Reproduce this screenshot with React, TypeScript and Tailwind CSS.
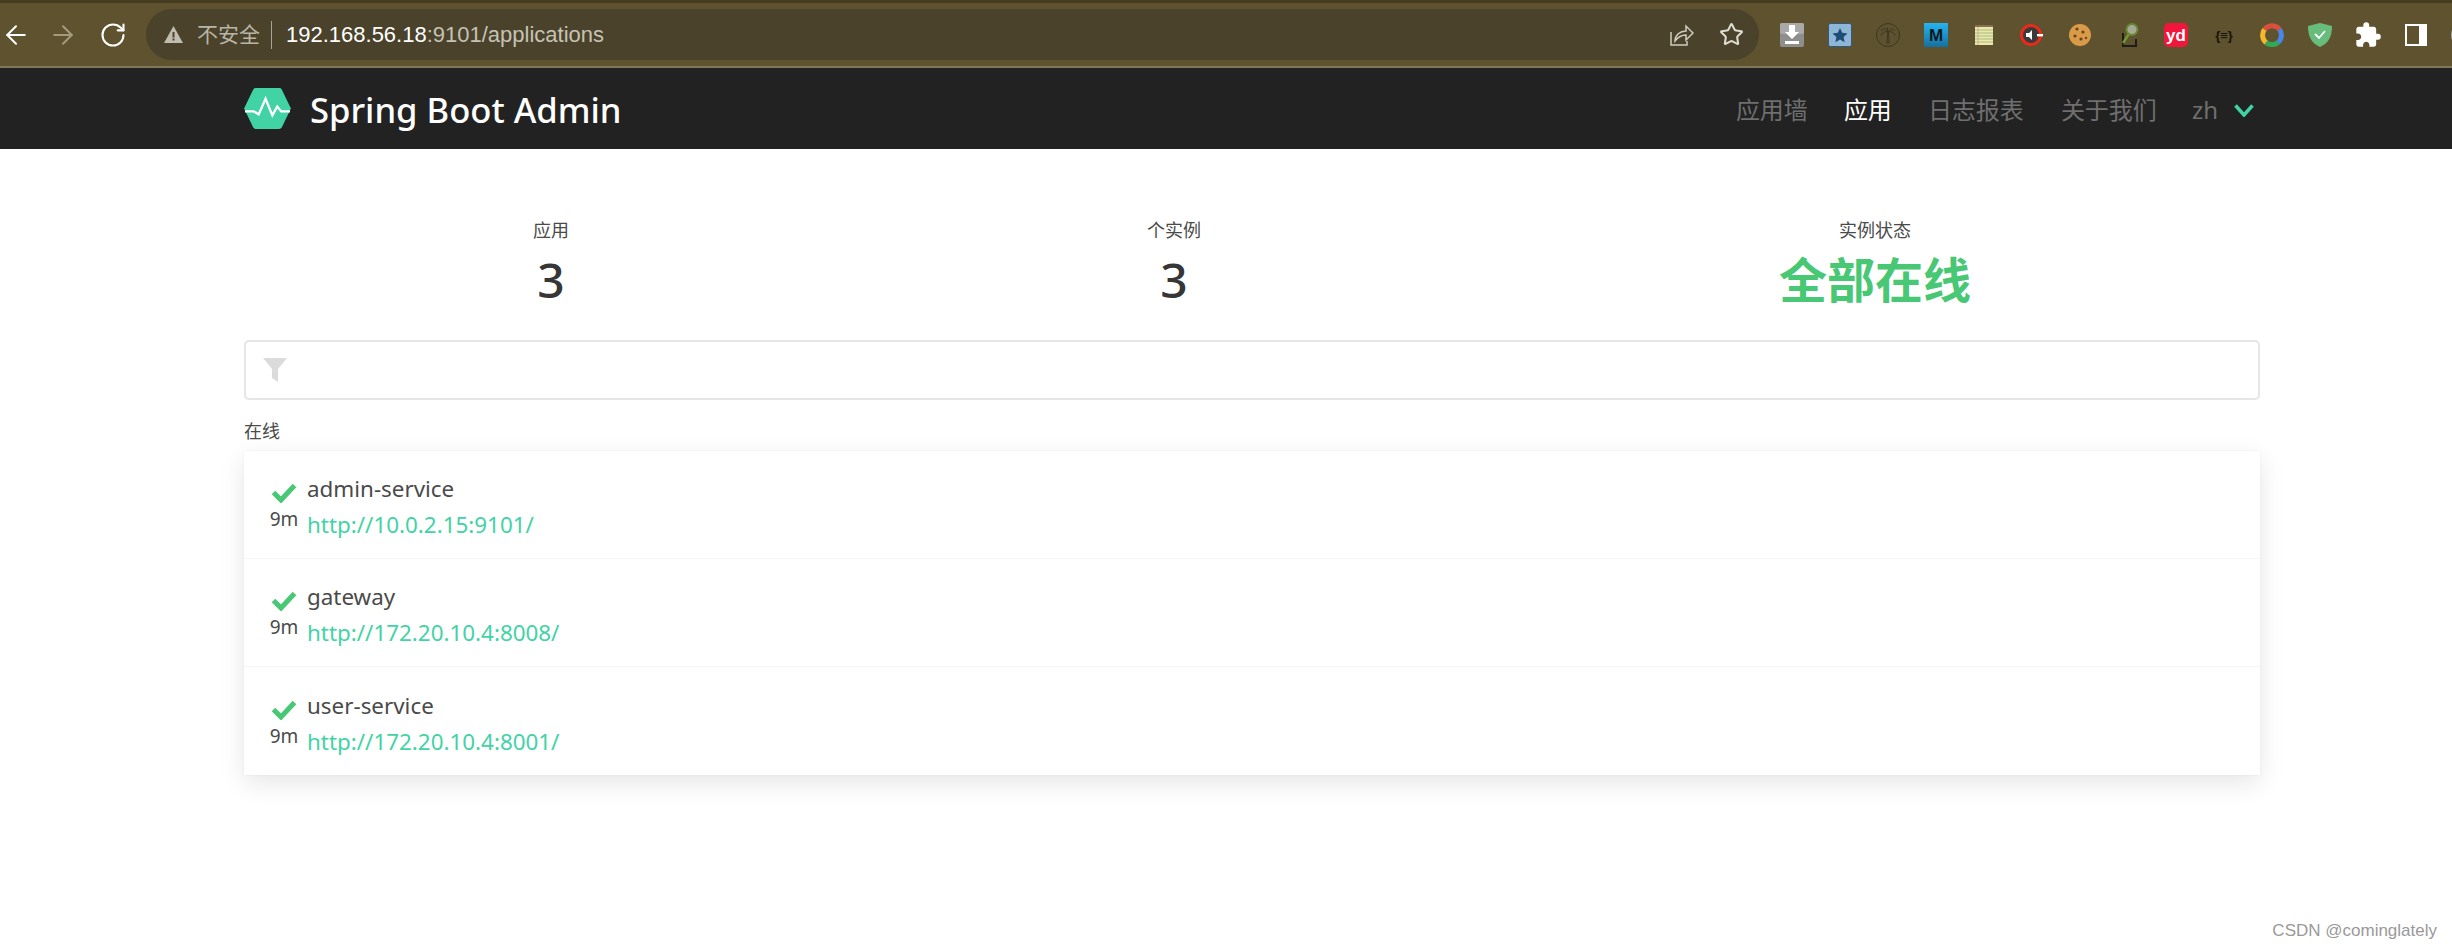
import { ArrowLeft, ArrowRight, RotateCw, Star } from 'lucide-react'
import { MdExtension } from 'react-icons/md'

const font = "font-['Noto_Sans','Noto_Sans_CJK_SC',sans-serif]"

const Extensions = () => (
  <div className="ml-[21px] flex items-center gap-[24px]">
    <svg width="24" height="24" viewBox="0 0 24 24" className="shrink-0">
      <rect width="24" height="24" rx="2" fill="#8e8e8e" />
      <rect width="24" height="11" rx="2" fill="#a9a9a9" />
      <path d="M9 2h6v7h4l-7 7-7-7h4z" fill="#fff" />
      <rect x="5" y="18" width="14" height="3" fill="#fff" />
    </svg>
    <svg width="24" height="24" viewBox="0 0 24 24" className="shrink-0">
      <rect x="0.5" y="0.5" width="23" height="23" rx="2" fill="#8fb6d6" stroke="#2c5a80" />
      <path d="M12 5l2.2 4.8 5.3.6-3.9 3.6 1 5.2-4.6-2.6-4.6 2.6 1-5.2-3.9-3.6 5.3-.6z" fill="#1d4c74" />
    </svg>
    <svg width="24" height="24" viewBox="0 0 24 24" fill="none" stroke="#3a3526" strokeWidth="1" className="shrink-0">
      <circle cx="12" cy="12" r="11.5" />
      <path d="M11 21c0-4 .5-8 1-12M13 21c0-4 0-8-1-12M12 9C10 5 7 5 5 8M12 9c-3-1-6 0-7 4M12 9c2-4 5-4 7-1M12 9c3-1 6 0 7 4M12 9c-1-2-1-4 0-5" />
    </svg>
    <svg width="24" height="24" viewBox="0 0 24 24" className="shrink-0">
      <defs>
        <linearGradient id="mg" x1="0" y1="0" x2="0" y2="1">
          <stop offset="0" stopColor="#26b4ef" />
          <stop offset="1" stopColor="#15709e" />
        </linearGradient>
      </defs>
      <rect width="24" height="24" fill="url(#mg)" />
      <text x="12" y="18" textAnchor="middle" fontSize="17" fontFamily="Liberation Sans" fontWeight="700" fill="#0c1a22">M</text>
    </svg>
    <svg width="18" height="20" viewBox="0 0 18 20" className="ml-[3px] mr-[3px] shrink-0">
      <rect width="18" height="20" fill="#ece8a8" />
      <rect width="18" height="2" fill="#8b6d55" />
      <path d="M0 5h18M0 8h18M0 11h18M0 14h18M0 17h18" stroke="#a3bb88" />
      <path d="M3 2v18" stroke="#d9a98c" />
    </svg>
    <svg width="24" height="24" viewBox="0 0 24 24" className="shrink-0">
      <circle cx="11" cy="12" r="9.5" fill="#3a3a3a" stroke="#ec2a1c" strokeWidth="3" />
      <path d="M6 10h3l3-3v10l-3-3H6z" fill="#fff" />
      <rect x="17" y="11" width="6" height="2.4" fill="#fff" />
    </svg>
    <svg width="24" height="24" viewBox="0 0 24 24" className="shrink-0">
      <circle cx="12" cy="12" r="11" fill="#d89b49" />
      <circle cx="9" cy="6" r="1.6" fill="#6d4315" />
      <circle cx="15" cy="9" r="1.6" fill="#6d4315" />
      <circle cx="7" cy="13" r="1.6" fill="#6d4315" />
      <circle cx="13" cy="16" r="1.6" fill="#6d4315" />
      <circle cx="18" cy="15" r="1.2" fill="#6d4315" />
    </svg>
    <svg width="24" height="24" viewBox="0 0 24 24" fill="none" className="shrink-0">
      <path d="M7 10v13h13v-7" stroke="#1f1d18" strokeWidth="2" />
      <path d="M7 20l6-9" stroke="#6f9a35" strokeWidth="2.4" />
      <circle cx="16" cy="6.5" r="5.5" fill="#a7a795" stroke="#65882f" strokeWidth="2" />
    </svg>
    <svg width="24" height="24" viewBox="0 0 24 24" className="shrink-0">
      <rect width="24" height="24" rx="5" fill="#f2163d" />
      <text x="12" y="18" textAnchor="middle" fontSize="17" fontFamily="Liberation Sans" fontWeight="700" fill="#fff">yd</text>
    </svg>
    <svg width="24" height="24" viewBox="0 0 24 24" className="shrink-0">
      <text x="12" y="17" textAnchor="middle" fontSize="13" fontFamily="Liberation Sans" fontWeight="700" fill="#15130b">{'{≡}'}</text>
    </svg>
    <svg width="24" height="24" viewBox="0 0 24 24" fill="none" strokeWidth="5" className="shrink-0">
      <path d="M4.5 6.5A9.5 9.5 0 0 1 19.5 6.5" stroke="#d9503f" />
      <path d="M19.5 6.5A9.5 9.5 0 0 1 18 19.5" stroke="#4a86e8" />
      <path d="M18 19.5A9.5 9.5 0 0 1 6 19.5" stroke="#33a853" />
      <path d="M6 19.5A9.5 9.5 0 0 1 4.500 6.500" stroke="#f1b82d" />
    </svg>
    <svg width="24" height="24" viewBox="0 0 24 24" fill="none" className="shrink-0">
      <path d="M12 0l12 3c0 10-3 17-12 21C3 20 0 13 0 3z" fill="#68bc7c" />
      <path d="M7 11l4 4 6-7" stroke="#fff" strokeWidth="1.8" />
    </svg>
    <MdExtension size={28} className="-mx-[2px] shrink-0 text-white" />
    <svg width="22" height="22" viewBox="0 0 22 22" fill="none" className="ml-[1px] shrink-0">
      <rect x="1" y="1" width="20" height="20" stroke="#fff" strokeWidth="2" />
      <rect x="14" y="1" width="7" height="20" fill="#fff" />
    </svg>
    <div className="h-[24px] w-[24px] shrink-0 rounded-full bg-[#a1a9b3]" />
  </div>
)

const BrowserBar = () => (
  <div className="flex h-[68px] flex-col font-['Liberation_Sans','Noto_Sans_CJK_SC',sans-serif]">
    <div className="h-[3px] bg-[#463c20]" />
    <div className="flex min-h-0 flex-1 items-center overflow-hidden bg-[#5f522e] pl-[1px]">
      <ArrowLeft size={30} strokeWidth={1.6} className="shrink-0 text-white" />
      <ArrowRight size={30} strokeWidth={1.6} className="ml-[17px] shrink-0 text-[#a39a80]" />
      <RotateCw size={28} strokeWidth={1.8} className="ml-[21px] shrink-0 text-white" />
      <div className="ml-[19px] flex h-[51px] w-[1613px] shrink-0 items-center rounded-full bg-[#4a422a] pl-[18px] text-[22px]">
        <svg width="19" height="17" viewBox="0 0 19 17" className="mr-[14px]">
          <path d="M9.500 0l9.500 17H0z" fill="#c0bcae" />
          <rect x="8.500" y="6" width="2" height="5.500" fill="#4a422a" />
          <rect x="8.500" y="12.500" width="2" height="2" fill="#4a422a" />
        </svg>
        <span className="text-[21px] text-[#b9b5a6]">不安全</span>
        <span className="ml-[11px] mr-[14px] h-[28px] w-px bg-[#a8a390]" />
        <span className="text-white">192.168.56.18</span>
        <span className="text-[#c6c2b4]">:9101/applications</span>
        <svg width="24" height="22" viewBox="0 0 24 22" fill="none" stroke="#d0ccc0" strokeWidth="1.5" className="ml-auto mr-[25px]">
          <path d="M1 8v13h16v-4" />
          <path d="M5 17c0-6 5-10 11-10V2l7 7-7 7v-5c-5 0-8 2-11 6z" />
        </svg>
        <Star size={25} strokeWidth={2} className="mr-[15px] text-[#dedbd0]" />
      </div>
      <Extensions />
    </div>
    <div className="h-[2px] bg-[#7f7558]" />
  </div>
)

const Navbar = () => (
  <nav className={`flex h-[81px] items-center bg-[#222] pl-[244px] pr-[198px] pt-[3px] ${font}`}>
    <svg width="47" height="41" viewBox="0 0 48 42" className="-mt-[3px]">
      <path d="M12 0h24a3 3 0 0 1 2.600 1.500L48 21l-9.400 19.500A3 3 0 0 1 36 42H12a3 3 0 0 1-2.600-1.500L0 21 9.400 1.500A3 3 0 0 1 12 0z" fill="#42d3a5" />
      <path d="M1 24h9l5 3 7-16 7 17 5-9 4 5h9" fill="none" stroke="#fff" strokeWidth="2.400" />
    </svg>
    <span className="ml-[19px] text-[34.6px] font-medium text-white">Spring Boot Admin</span>
    <div className="ml-auto flex items-center text-[24px] text-[#6f6f6f]">
      <span>应用墙</span>
      <span className="ml-[36px] text-white">应用</span>
      <span className="ml-[36px]">日志报表</span>
      <span className="ml-[37px]">关于我们</span>
      <span className="ml-[35px]">zh</span>
      <svg width="20" height="13" viewBox="0 0 20 13" className="ml-[16px]" fill="none">
        <path d="M1.500 1.500L10 11 18.500 1.500" stroke="#42d3a5" strokeWidth="3.500" />
      </svg>
    </div>
  </nav>
)

const Stat = ({ label, value, color }: { label: string; value: string; color?: boolean }) => (
  <div className="flex grow flex-col items-center">
    <p className="text-[18px] leading-[24px] text-[#4a4a4a]">{label}</p>
    {color ? (
      <p className="mt-[8px] text-[48px] leading-[60px] font-bold text-[#48c774]">{value}</p>
    ) : (
      <p className="mt-[8px] text-[48px] leading-[60px] font-medium text-[#363636]">{value}</p>
    )}
  </div>
)

const instances = [
  { name: 'admin-service', url: 'http://10.0.2.15:9101/' },
  { name: 'gateway', url: 'http://172.20.10.4:8008/' },
  { name: 'user-service', url: 'http://172.20.10.4:8001/' },
]

const InstanceRow = ({ name, url }: { name: string; url: string }) => (
  <div className="flex h-[108px] items-center border-b border-[#f5f5f5] pl-[21px] last:border-b-0">
    <div className="flex w-[38px] flex-col items-center pt-[4px]">
      <svg width="26" height="21" viewBox="0 0 26 21" fill="none">
        <path d="M2.500 10.500l7.500 7.500L23.500 3.500" stroke="#48c774" strokeWidth="5" />
      </svg>
      <span className="mt-[4px] text-[19px] leading-[24px] text-[#4a4a4a]">9m</span>
    </div>
    <div className="ml-[4px] flex flex-col pt-[5px]">
      <span className="text-[22.4px] leading-[36px] text-[#4a4a4a]">{name}</span>
      <span className="text-[22.4px] leading-[36px] text-[#42d3a5]">{url}</span>
    </div>
  </div>
)

export default function App() {
  return (
    <div className="relative h-[949px] overflow-hidden bg-white">
      <BrowserBar />
      <Navbar />
      <main className={`ml-[244px] mr-[192px] pt-[69px] ${font}`}>
        <div className="flex">
          <Stat label="应用" value="3" />
          <Stat label="个实例" value="3" />
          <Stat label="实例状态" value="全部在线" color />
        </div>
        <div className="mt-[30px] flex h-[60px] items-center rounded-[5px] border-2 border-[#e6e6e6] pl-[16px]">
          <svg width="26" height="26" viewBox="0 0 26 26">
            <path d="M1 1h24L16 12v13l-6-4v-9z" fill="#dbdbdb" />
          </svg>
        </div>
        <p className="mt-[19px] text-[18px] leading-[24px] text-[#4a4a4a]">在线</p>
        <div className="mt-[8px] bg-white shadow-[0_8px_24px_rgba(10,10,10,0.1),0_0_1px_rgba(10,10,10,0.1)]">
          {instances.map((item) => (
            <InstanceRow key={item.name} name={item.name} url={item.url} />
          ))}
        </div>
      </main>
      <span className="absolute bottom-[6px] right-[15px] font-['Liberation_Sans',sans-serif] text-[17px] text-[#999]">
        CSDN @cominglately
      </span>
    </div>
  )
}
